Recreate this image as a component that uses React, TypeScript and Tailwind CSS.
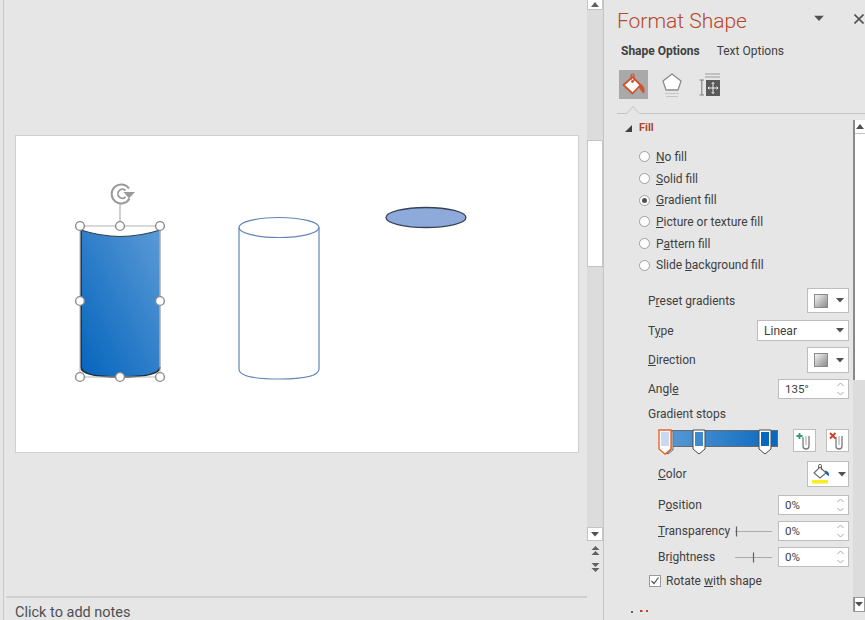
const font = "font-['Roboto','Liberation_Sans',sans-serif]";

function Caret({ className = "" }: { className?: string }) {
  return (
    <svg width="8" height="5" viewBox="0 0 8 5" className={className}>
      <path d="M0 0H8L4 4.5Z" fill="#505050" />
    </svg>
  );
}

function GradSwatch() {
  return <div className="w-[14px] h-[14px] border border-[#8a8a8a] bg-gradient-to-br from-[#f4f4f4] to-[#8c8c8c]" />;
}

function DropButton({ children }: { children: React.ReactNode }) {
  return (
    <div className="w-[42px] h-full bg-white border border-[#bdbdbd] flex items-center justify-center gap-[8px] pl-[2px]">
      {children}
      <Caret />
    </div>
  );
}

function Spinner({ value, className = "" }: { value: string; className?: string }) {
  return (
    <div className={`w-[71px] h-full bg-white border border-[#bdbdbd] flex items-center justify-between pl-[6px] pr-[3px] text-[11.5px] text-[#404040] ${className}`}>
      <span>{value}</span>
      <svg width="9" height="16" viewBox="0 0 9 16">
        <path d="M1.5 5L4.5 2L7.5 5M1.5 11L4.5 14L7.5 11" fill="none" stroke="#a8a8a8" strokeWidth="1" />
      </svg>
    </div>
  );
}

function Radio({ checked, children }: { checked?: boolean; children: React.ReactNode }) {
  return (
    <div className="h-[21.7px] flex items-center pl-[35px] gap-[6px]">
      <div className="w-[11px] h-[11px] rounded-full bg-white border border-[#a0a0a0] flex items-center justify-center">
        {checked && <div className="w-[5px] h-[5px] rounded-full bg-[#505050]" />}
      </div>
      <span>{children}</span>
    </div>
  );
}

function Row({ label, className, indent, children }: { label: React.ReactNode; className: string; indent?: boolean; children: React.ReactNode }) {
  return (
    <div className={`flex items-stretch justify-end pr-[4px] ${indent ? "pl-[54px]" : "pl-[44px]"} ${className}`}>
      <div className="flex-1 flex items-center">{label}</div>
      {children}
    </div>
  );
}

function Slider({ tick }: { tick: number }) {
  return (
    <svg width="37" height="20" viewBox="0 0 37 20" className="mr-[6px]">
      <path d="M0 10.5H37" stroke="#ababab" />
      <path d={`M${tick} 5.5V15.5`} stroke="#606060" strokeWidth="1.2" />
    </svg>
  );
}

function MainScrollbar() {
  return (
    <div className="w-[16px] h-full flex flex-col items-stretch">
      <div className="h-[10px] bg-white border border-t-0 border-[#c4c4c4] flex items-center justify-center">
        <svg width="8" height="5" viewBox="0 0 8 5"><path d="M0 5H8L4 0Z" fill="#606060" /></svg>
      </div>
      <div className="h-[130px] bg-[#dcdcdc]" />
      <div className="h-[127px] bg-white border border-[#c4c4c4]" />
      <div className="h-[260px] bg-[#dcdcdc]" />
      <div className="h-[14px] bg-white border border-[#c4c4c4] flex items-center justify-center">
        <Caret />
      </div>
      <div className="flex flex-col items-center gap-[8px] pt-[5px]">
        <svg width="9" height="9" viewBox="0 0 9 9"><path d="M0.5 4H8.5L4.5 0ZM0.5 9H8.5L4.5 5Z" fill="#606060" /></svg>
        <svg width="9" height="9" viewBox="0 0 9 9"><path d="M0.5 0H8.5L4.5 4ZM0.5 5H8.5L4.5 9Z" fill="#606060" /></svg>
      </div>
    </div>
  );
}

function SlideDrawing() {
  const handles = [[80, 226], [120, 226], [160, 226], [80, 301], [160, 301], [80, 377], [120, 377], [160, 377]];
  return (
    <svg width="562" height="316" viewBox="16 136 562 316" className="block">
      <defs>
        <linearGradient id="cyl" x1="1" y1="0" x2="0" y2="1">
          <stop offset="0" stopColor="#5b9ad6" />
          <stop offset="0.55" stopColor="#2a7cc8" />
          <stop offset="1" stopColor="#0565bd" />
        </linearGradient>
      </defs>
      {/* selected cylinder */}
      <path d="M81 230Q120 243 160 230V367Q160 377 120 377Q81 377 81 367Z" fill="url(#cyl)" />
      <path d="M81 230Q120 243 160 230" fill="none" stroke="#34404c" strokeWidth="1.2" />
      <path d="M160 367Q160 377 120 377Q81 377 81 367V230" fill="none" stroke="#222a33" strokeWidth="1.6" />
      <path d="M160 230V367" stroke="#8f9aa6" strokeWidth="1" />
      <rect x="80" y="226" width="80" height="151" fill="none" stroke="#b4b4b4" />
      <path d="M120 226V203" stroke="#b0b0b0" strokeWidth="1.2" />
      <path d="M129 188.5A9.5 9.5 0 1 0 129.5 198.5" fill="none" stroke="#9a9a9a" strokeWidth="2" />
      <path d="M125.5 190.5A4.5 4.5 0 1 0 125.5 197" fill="none" stroke="#9a9a9a" strokeWidth="1.8" />
      <path d="M123.5 192H135L129 198.5Z" fill="#9a9a9a" />
      {handles.map(([x, y]) => (
        <circle key={`${x}-${y}`} cx={x} cy={y} r="4.4" fill="#fff" stroke="#8a8a8a" strokeWidth="1.4" />
      ))}
      {/* empty cylinder */}
      <g fill="none" stroke="#6485b8" strokeWidth="1.2">
        <ellipse cx="279" cy="227.5" rx="40" ry="10" />
        <path d="M239 227.5V369Q239 379 279 379Q319 379 319 369V227.5" />
      </g>
      {/* flat ellipse */}
      <ellipse cx="426" cy="217.5" rx="40" ry="10" fill="#8eaadb" stroke="#36425a" strokeWidth="1.3" />
    </svg>
  );
}

function BucketTab() {
  return (
    <div className="w-[29px] h-[29px] bg-[#a9a9a9] flex items-center justify-center">
      <svg width="25" height="25" viewBox="0 0 25 25">
        <path d="M2.5 13L11.5 5L19.5 13L11.5 21.5Z" fill="#fff" stroke="#d0532b" strokeWidth="1.8" strokeLinejoin="round" />
        <path d="M10 8V3.5A1.5 1.5 0 0 1 13 3.5V9" fill="none" stroke="#d0532b" strokeWidth="1.2" />
        <circle cx="11.5" cy="9.5" r="1.4" fill="#d0532b" />
        <path d="M19.5 12C23 13.5 24.5 18 23 21.5C21 20 19 17.5 17.5 15Z" fill="#d0532b" />
      </svg>
    </div>
  );
}

function PentagonTab() {
  return (
    <svg width="22" height="26" viewBox="0 0 22 26">
      <path d="M11 2L20 9L17 18H5L2 9Z" fill="#fff" stroke="#8c8c8c" strokeWidth="1.3" strokeLinejoin="round" />
      <path d="M4 21.5H18M5 24.5H17" stroke="#c4c4c4" strokeWidth="1" />
    </svg>
  );
}

function LayoutTab() {
  return (
    <svg width="22" height="24" viewBox="0 0 22 24">
      <path d="M6 1H21M6 4H21" stroke="#9a9a9a" strokeWidth="1" />
      <path d="M0.5 7H5M0.5 22H5M2.8 7V22" stroke="#808080" strokeWidth="1.1" fill="none" />
      <rect x="7" y="7" width="14" height="16" fill="#5a5a5a" />
      <path d="M14 9.5V20.5M9 15H19M12.8 10.8L14 9.5L15.2 10.8M12.8 19.2L14 20.5L15.2 19.2M10.3 13.8L9 15L10.3 16.2M17.7 13.8L19 15L17.7 16.2" stroke="#fff" strokeWidth="0.9" fill="none" />
    </svg>
  );
}

function Stop({ x, selected }: { x: number; selected?: boolean }) {
  return (
    <path
      d={`M${x} 1H${x + 12}V20L${x + 6} 25L${x} 20Z`}
      fill="#fff"
      stroke={selected ? "#e8652c" : "#4a4a4a"}
      strokeWidth={selected ? 1.4 : 1}
    />
  );
}

function GradientStops() {
  return (
    <svg width="121" height="28" viewBox="0 0 121 28" className="block">
      <defs>
        <linearGradient id="bar" x1="0" x2="1" y1="0" y2="0">
          <stop offset="0" stopColor="#5b9ad6" />
          <stop offset="1" stopColor="#0868bf" />
        </linearGradient>
      </defs>
      <rect x="6.5" y="1.5" width="113" height="16" fill="url(#bar)" stroke="#6a6a6a" />
      <path d="M6 2H15V21L10 25L6 21Z" fill="#d8d8d8" stroke="#707070" />
      <path d="M4 2H13V21L8 25L4 21Z" fill="#d8d8d8" stroke="#707070" />
      <Stop x={1} selected />
      <rect x="3" y="3" width="8" height="14" fill="#c8daf2" />
      <Stop x={35} />
      <rect x="37" y="3" width="8" height="14" fill="#3c8ad0" />
      <Stop x={101} />
      <rect x="103" y="3" width="8" height="14" fill="#0868bf" />
    </svg>
  );
}

function ClipIcon({ kind }: { kind: "add" | "remove" }) {
  return (
    <div className="w-[23px] h-[23px] bg-white border border-[#bdbdbd] flex items-center justify-center">
      <svg width="17" height="18" viewBox="0 0 17 18">
        <path d="M7 5V14A3 3 0 0 0 13 14V4" fill="none" stroke="#7a7a7a" strokeWidth="1.3" />
        <path d="M10 4V13" stroke="#a0a0a0" strokeWidth="1" />
        {kind === "add" ? (
          <path d="M3.5 1V7M0.5 4H6.5" stroke="#2f9a72" strokeWidth="1.8" />
        ) : (
          <path d="M1 1L6.5 6.5M6.5 1L1 6.5" stroke="#d23c2a" strokeWidth="1.8" />
        )}
      </svg>
    </div>
  );
}

function ColorBucket() {
  return (
    <svg width="18" height="20" viewBox="0 0 18 20">
      <path d="M2 9L8 3L14 9L8 14Z" fill="#fff" stroke="#6a6a6a" strokeWidth="1.1" />
      <path d="M6.5 5V1.8A1.5 1.5 0 0 1 9.5 1.8V6" fill="none" stroke="#6a6a6a" strokeWidth="1" />
      <path d="M13 6.5C16 7 17.5 9.5 17 12C15.5 11.5 14.5 10.5 13.5 9Z" fill="#1f5fae" />
      <rect x="0" y="16" width="16" height="3.5" fill="#f5ee20" />
    </svg>
  );
}

function InnerScrollbar() {
  return (
    <div className="w-[12px] h-[492px] flex flex-col border-l-2 border-[#8a8a8a] bg-white">
      <div className="h-[14px] border-b border-[#c4c4c4] flex items-center justify-center">
        <svg width="8" height="5" viewBox="0 0 8 5"><path d="M0 5H8L4 0Z" fill="#505050" /></svg>
      </div>
      <div className="h-[246px]" />
      <div className="flex-1 bg-[#dcdcdc] -ml-[2px]" />
      <div className="h-[15px] border border-[#9a9a9a] -ml-[2px] flex items-center justify-center">
        <Caret />
      </div>
    </div>
  );
}

function FormatPanel() {
  return (
    <div className="w-[261px] h-full overflow-hidden text-[12px] text-[#404040]">
      {/* title, tabs and icons */}
      <div className="h-[120px] pt-[9px] pl-[13px] relative">
        <div className="flex items-center h-[24px] pr-[3px]">
          <span className="text-[21px] font-light text-[#b7472a] leading-[24px] flex-1">Format Shape</span>
          <Caret className="mr-[31px] -mt-[5px] scale-125" />
          <svg width="10" height="10" viewBox="0 0 10 10" className="-mt-[5px] -mr-[2px]">
            <path d="M0.5 0.5L9.5 9.5M9.5 0.5L0.5 9.5" stroke="#505050" strokeWidth="1.6" />
          </svg>
        </div>
        <div className="flex items-center gap-[17px] h-[20px] mt-[8px] pl-[4px]">
          <span className="font-bold">Shape Options</span>
          <span>Text Options</span>
        </div>
        <div className="flex items-center mt-[9px] pl-[2px] h-[29px]">
          <BucketTab />
          <div className="ml-[13px]"><PentagonTab /></div>
          <div className="ml-[16px]"><LayoutTab /></div>
        </div>
        <svg width="248" height="10" viewBox="0 0 248 10" className="absolute left-[13px] top-[105px]">
          <path d="M0 8.5H10L16 1.5L22 8.5H248" fill="none" stroke="#c4c4c4" />
        </svg>
      </div>
      <div className="flex items-start">
        <div className="w-[249px]">
          <div className="h-[16px] flex items-center pl-[21px] gap-[7px] text-[11px] font-bold text-[#b7472a]">
            <svg width="7" height="7" viewBox="0 0 7 7"><path d="M7 0V7H0Z" fill="#404040" /></svg>
            <span>Fill</span>
          </div>
          <div className="mt-[10px]">
            <Radio><u>N</u>o fill</Radio>
            <Radio><u>S</u>olid fill</Radio>
            <Radio checked><u>G</u>radient fill</Radio>
            <Radio><u>P</u>icture or texture fill</Radio>
            <Radio>P<u>a</u>ttern fill</Radio>
            <Radio>Slide <u>b</u>ackground fill</Radio>
          </div>
          <Row className="h-[25px] mt-[12px]" label={<span>P<u>r</u>eset gradients</span>}>
            <DropButton><GradSwatch /></DropButton>
          </Row>
          <Row className="h-[21px] mt-[7px]" label={<span>T<u>y</u>pe</span>}>
            <div className="w-[92px] bg-white border border-[#bdbdbd] flex items-center justify-between pl-[6px] pr-[4px]">
              <span>Linear</span>
              <Caret />
            </div>
          </Row>
          <Row className="h-[26px] mt-[6px]" label={<span><u>D</u>irection</span>}>
            <DropButton><GradSwatch /></DropButton>
          </Row>
          <Row className="h-[20px] mt-[6px]" label={<span>Angl<u>e</u></span>}>
            <Spinner value="135°" />
          </Row>
          <div className="h-[16px] mt-[7px] pl-[44px] flex items-center">Gradient stops</div>
          <div className="h-[23px] mt-[7px] pl-[54px] pr-[4px] flex items-start">
            <GradientStops />
            <div className="ml-[14px] flex gap-[10px]">
              <ClipIcon kind="add" />
              <ClipIcon kind="remove" />
            </div>
          </div>
          <Row indent className="h-[26px] mt-[9px]" label={<span><u>C</u>olor</span>}>
            <DropButton><ColorBucket /></DropButton>
          </Row>
          <Row indent className="h-[20px] mt-[8px]" label={<span>P<u>o</u>sition</span>}>
            <Spinner value="0%" />
          </Row>
          <Row indent className="h-[20px] mt-[6px]" label={<span><u>T</u>ransparency</span>}>
            <Slider tick={1.5} />
            <Spinner value="0%" />
          </Row>
          <Row indent className="h-[20px] mt-[6px]" label={<span>Br<u>i</u>ghtness</span>}>
            <Slider tick={18.5} />
            <Spinner value="0%" />
          </Row>
          <div className="h-[16px] mt-[6px] pl-[45px] flex items-center gap-[5px]">
            <div className="w-[12px] h-[12px] bg-white border border-[#9a9a9a] flex items-center justify-center">
              <svg width="10" height="10" viewBox="0 0 10 10"><path d="M1.5 5L4 7.5L8.5 1.5" fill="none" stroke="#505050" strokeWidth="1.2" /></svg>
            </div>
            <span>Rotate <u>w</u>ith shape</span>
          </div>
          {/* next section heading, only its top pixels show in the panel */}
          <svg width="40" height="3" viewBox="0 0 40 3" className="mt-[21px] ml-[22px] block">
            <path d="M5 1H7V3H5Z" fill="#606060" />
            <path d="M14 0H16.5V2H14ZM20 0H22V2H20Z" fill="#b7472a" />
          </svg>
        </div>
        <InnerScrollbar />
      </div>
    </div>
  );
}

export default function App() {
  return (
    <div className={`w-[865px] h-[620px] overflow-hidden bg-[#e6e6e6] flex ${font}`}>
      <div className="w-[4px] h-full border-r border-[#c8c8c8]" />
      <div className="w-[583px] h-full flex flex-col">
        <div className="flex-1 pt-[135px] pl-[11px]">
          <div className="w-[564px] h-[318px] bg-white border border-[#cfcfcf]">
            <SlideDrawing />
          </div>
        </div>
        <div className="h-[24px] ml-[2px] border-t-2 border-[#d0d0d0] pl-[9px] pt-[6px] text-[14.5px] leading-[18px] text-[#505050]">
          Click to add notes
        </div>
      </div>
      <MainScrollbar />
      <div className="w-[1px] h-full bg-[#c4c4c4]" />
      <FormatPanel />
    </div>
  );
}
